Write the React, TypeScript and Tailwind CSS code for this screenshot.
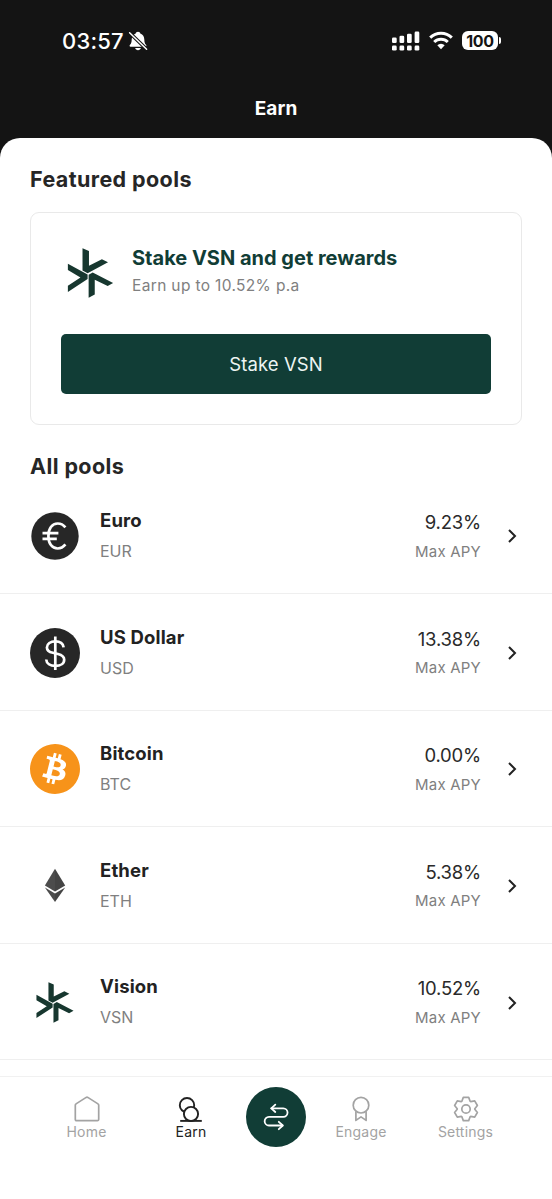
import React from "react";
import { SiBitcoin } from "react-icons/si";

const VisionLogo = ({ className }: { className: string }) => (
  <svg viewBox="146 147 135 147" className={className} fill="#17372f">
    <path d="M190 148l19 8v43l38-19 18 9-60 32-15-8z" />
    <path d="M147 193l58 32v13l-58 38v-18l37-24-37-22z" />
    <path d="M208 226l12-7 60 31-16 9-38-19v44l-18 9z" />
  </svg>
);

const EuroIcon = () => (
  <svg viewBox="0 0 50 50" className="size-[50px]" fill="none">
    <circle cx="25" cy="25" r="23.7" fill="#272727" />
    <g stroke="#fff" strokeWidth="2.7">
      <path d="M35.400 16.400C33.400 13.900 30.700 12.500 27.700 12.500c-5.700 0-9.300 5-9.300 12.500s3.600 12.500 9.300 12.500c3 0 5.700-1.600 7.700-4.100" />
      <path d="M12.500 22.200h15.900M12.500 27.900h14.300" />
    </g>
  </svg>
);

const DollarIcon = () => (
  <svg viewBox="0 0 50 50" className="size-[50px]" fill="none">
    <circle cx="25" cy="25" r="25" fill="#272727" />
    <g stroke="#fff" strokeWidth="2.700">
      <path d="M33.600 19.300c-.3-3.600-3.500-6-8.200-6-4.900 0-8.500 2.500-8.500 6.100 0 3 2.100 4.500 6 5.400l5 1.200c4.200 1 6.300 2.700 6.300 5.700 0 3.800-3.600 6.200-8.900 6.200-5.200 0-8.800-2.500-9.100-6.400" />
      <path d="M25.300 8.500v33.500" />
    </g>
  </svg>
);

const BitcoinIcon = () => <SiBitcoin className="size-[50px] text-[#f7931a]" />;

const EtherIcon = () => (
  <svg viewBox="0 0 50 50" className="size-[50px]">
    <path d="M25 7.700L14.900 24.400 25 30.600z" fill="#4c4c4c" />
    <path d="M25 7.700l10.200 16.700L25 30.600z" fill="#444" />
    <path d="M14.900 26.500L25 32.600v8.300z" fill="#4c4c4c" />
    <path d="M35.200 26.500L25 32.600v8.300z" fill="#444" />
  </svg>
);

const pools = [
  { name: "Euro", code: "EUR", apy: "9.23%", icon: <EuroIcon /> },
  { name: "US Dollar", code: "USD", apy: "13.38%", icon: <DollarIcon /> },
  { name: "Bitcoin", code: "BTC", apy: "0.00%", icon: <BitcoinIcon /> },
  { name: "Ether", code: "ETH", apy: "5.38%", icon: <EtherIcon /> },
  {
    name: "Vision",
    code: "VSN",
    apy: "10.52%",
    icon: <VisionLogo className="mr-px h-[41px] w-[38px]" />,
  },
];

const StatusBar = () => (
  <div className="flex h-[82px] items-center justify-between pl-[62px] pr-[51px]">
    <div className="flex items-center gap-1">
      <span className="text-[22px] font-medium leading-7 tracking-[0.2px]">
        03:57
      </span>
      <svg viewBox="0 0 20 20" className="size-5" fill="#fff">
        <path d="M10 .8c-1.300 0-2.100.8-2.300 1.700C5 3.400 3.800 5.600 3.700 8.500c-.1 3-.6 4.200-1.700 5.300-.8.900-.5 2 .6 2h14.800c1.100 0 1.400-1.100.6-2-1.100-1.100-1.600-2.300-1.700-5.300-.1-2.900-1.300-5.100-4-6C12.100 1.600 11.300.8 10 .8z" />
        <path d="M7.200 17.100h5.600c-.3 1.300-1.400 2.100-2.800 2.100s-2.500-.8-2.800-2.100z" />
        <path d="M1.600 1.800l17 16.400" stroke="#141414" strokeWidth="3.600" />
        <path
          d="M1.600 1.800l17 16.400"
          stroke="#fff"
          strokeWidth="1.500"
          strokeLinecap="round"
        />
      </svg>
    </div>
    <div className="flex items-center">
      <svg viewBox="0 0 28 20" className="mb-px h-5 w-7" fill="#fff">
        <rect x="0" y="6.500" width="4.700" height="5.500" rx="1.300" />
        <rect x="7.500" y="4.700" width="4.700" height="7.300" rx="1.300" />
        <rect x="15" y="2.700" width="4.700" height="9.300" rx="1.300" />
        <rect x="22.600" y=".6" width="4.700" height="11.400" rx="1.300" />
        <rect x="0" y="14.600" width="4.700" height="4.900" rx="1.300" />
        <rect x="7.500" y="14.600" width="4.700" height="4.900" rx="1.300" />
        <rect x="15" y="14.600" width="4.700" height="4.900" rx="1.300" />
        <rect x="22.600" y="14.600" width="4.700" height="4.900" rx="1.300" />
      </svg>
      <svg
        viewBox="0 0 24 20"
        className="mb-px ml-[9px] h-5 w-6"
        fill="none"
        stroke="#fff"
        strokeWidth="3"
      >
        <path d="M1.200 6.700a15.500 15.500 0 0 1 21.600 0" />
        <path d="M5.200 11a9.800 9.800 0 0 1 13.600 0" />
        <path
          d="M8.300 14.300a5.300 5.300 0 0 1 7.400 0L12 18.300z"
          fill="#fff"
          stroke="none"
        />
      </svg>
      <div className="mb-px ml-[9px] flex h-[19px] w-9 items-center justify-center rounded-[6px] bg-white text-[16px] font-bold leading-none tracking-[-0.3px] text-[#141414]">
        100
      </div>
      <div className="mb-px ml-px h-[7px] w-[2px] rounded-r-full bg-white" />
    </div>
  </div>
);

const FeaturedCard = () => (
  <div className="mx-[30px] mt-[19px] h-[213px] rounded-[9px] border border-[#e9e9e9] px-[30px] pt-[29px]">
    <div className="flex h-[62px] items-center">
      <VisionLogo className="ml-[6px] h-[50px] w-[47px]" />
      <div className="ml-[18px] pb-[4px]">
        <h3 className="text-[20px] font-bold leading-7 text-[#113d36]">
          Stake VSN and get rewards
        </h3>
        <p className="mt-[2px] text-[15.5px] leading-6 tracking-[0.35px] text-[#808080]">
          Earn up to 10.52% p.a
        </p>
      </div>
    </div>
    <button className="mt-[30px] block h-[60px] w-full rounded-[5px] bg-[#113d36] pt-px text-[18.5px] tracking-[0.1px] text-[#eef5f3]">
      Stake VSN
    </button>
  </div>
);

const PoolRow = ({ pool }: { pool: (typeof pools)[number] }) => (
  <li className="flex h-[116.6px] items-center border-b border-[#efefef] pl-[30px] pr-[35px] pt-[2px]">
    <div className="flex size-[50px] items-center justify-center">
      {pool.icon}
    </div>
    <div className="ml-5 flex-1 pb-[1.5px]">
      <p className="text-[18.5px] font-bold leading-6 tracking-[0.15px] text-[#222]">
        {pool.name}
      </p>
      <p className="mt-[7px] text-[16px] leading-6 text-[#808080]">
        {pool.code}
      </p>
    </div>
    <div className="pt-px text-right">
      <p className="text-[18.5px] leading-6 tracking-[-0.2px] text-[#2a2a2a]">
        {pool.apy}
      </p>
      <p className="mt-[5.5px] text-[15px] leading-6 tracking-[0.2px] text-[#808080]">
        Max APY
      </p>
    </div>
    <svg
      viewBox="0 0 10 14"
      className="ml-[26px] h-[14px] w-[10px]"
      fill="none"
      stroke="#222"
      strokeWidth="2"
    >
      <path d="M2 1l6 6-6 6" />
    </svg>
  </li>
);

// six teeth, one every 60 degrees
const gearPath = () => {
  const points: string[] = [];
  for (let i = 0; i < 6; i++) {
    [
      [-28, 8.800],
      [-13, 11.900],
      [13, 11.900],
      [28, 8.800],
    ].forEach(([offset, radius]) => {
      const angle = ((i * 60 + offset - 90) * Math.PI) / 180;
      points.push(
        `${(13 + radius * Math.cos(angle)).toFixed(2)} ${(13 + radius * Math.sin(angle)).toFixed(2)}`
      );
    });
  }
  return `M${points.join("L")}Z`;
};

const NavItem = ({
  label,
  active,
  className,
  children,
}: {
  label: string;
  active?: boolean;
  className: string;
  children: React.ReactNode;
}) => (
  <div
    className={`flex flex-col items-center pt-[19px] ${active ? "text-[#222]" : "text-[#a3a3a3]"} ${className}`}
  >
    <svg
      viewBox="0 0 26 26"
      className="size-[26px]"
      fill="none"
      stroke="currentColor"
      strokeWidth="1.700"
      strokeLinejoin="round"
    >
      {children}
    </svg>
    <span className="text-[14px] leading-5 tracking-[0.2px]">{label}</span>
  </div>
);

const BottomNav = () => (
  <nav className="mt-[15.500px] flex h-[123px] border-t border-[#f1f1f1] pl-[33px]">
    <NavItem label="Home" className="w-[107px]">
      <path d="M1.300 9.200c0-.6.2-1 .7-1.300L12.200 1.400c.5-.3 1.100-.3 1.600 0L24 7.900c.5.300.7.700.7 1.300v14.200c0 .8-.5 1.300-1.300 1.300H2.600c-.8 0-1.300-.5-1.300-1.300z" />
    </NavItem>
    <NavItem label="Earn" active className="w-[102px]">
      <g strokeWidth="1.900">
        <circle cx="9" cy="9.200" r="7.200" />
        <circle cx="13" cy="18" r="7.100" fill="#fff" />
        <path d="M2.200 24.900h21.600" />
      </g>
    </NavItem>
    <div className="flex w-[68px] justify-center pt-[10px]">
      <button className="flex size-[60px] items-center justify-center rounded-full bg-[#113d36]">
        <svg
          viewBox="0 0 26 28"
          className="h-7 w-[26px]"
          fill="none"
          stroke="#fff"
          strokeWidth="1.800"
          strokeLinecap="round"
          strokeLinejoin="round"
        >
          <path d="M8.300 5.300h12a4.200 4.200 0 0 1 0 8.500H6a4.300 4.300 0 0 0 0 8.700h13.500" />
          <path d="M12.300 1.600L8.300 5.300l4 3.700M15.800 18.800l4 3.700-4 3.700" />
        </svg>
      </button>
    </div>
    <NavItem label="Engage" className="w-[102px]">
      <circle cx="13" cy="9.200" r="7.800" />
      <path d="M7.900 15.200v9.200l5.100-3.500 5.100 3.500v-9.200" />
    </NavItem>
    <NavItem label="Settings" className="w-[107px]">
      <circle cx="13" cy="13" r="4.200" />
      <path d={gearPath()} />
    </NavItem>
  </nav>
);

export default function App() {
  return (
    <div className="h-[1199px] w-[552px] overflow-hidden bg-[#141414] font-['Inter',sans-serif] text-white">
      <StatusBar />
      <div className="flex h-14 items-center justify-center pb-[2px]">
        <h1 className="text-[19px] font-bold leading-6 tracking-[0.1px]">
          Earn
        </h1>
      </div>

      <main className="h-[1061px] rounded-t-[20px] bg-white pt-[27px]">
        <h2 className="pl-[30px] text-[21.5px] font-bold leading-7 tracking-[0.4px] text-[#262626]">
          Featured pools
        </h2>
        <FeaturedCard />

        <h2 className="mt-[27px] pl-[30px] text-[21.5px] font-bold leading-7 tracking-[0.4px] text-[#262626]">
          All pools
        </h2>
        <ul className="-mt-[2.500px]">
          {pools.map((pool) => (
            <PoolRow key={pool.code} pool={pool} />
          ))}
        </ul>
        <BottomNav />
      </main>
    </div>
  );
}
